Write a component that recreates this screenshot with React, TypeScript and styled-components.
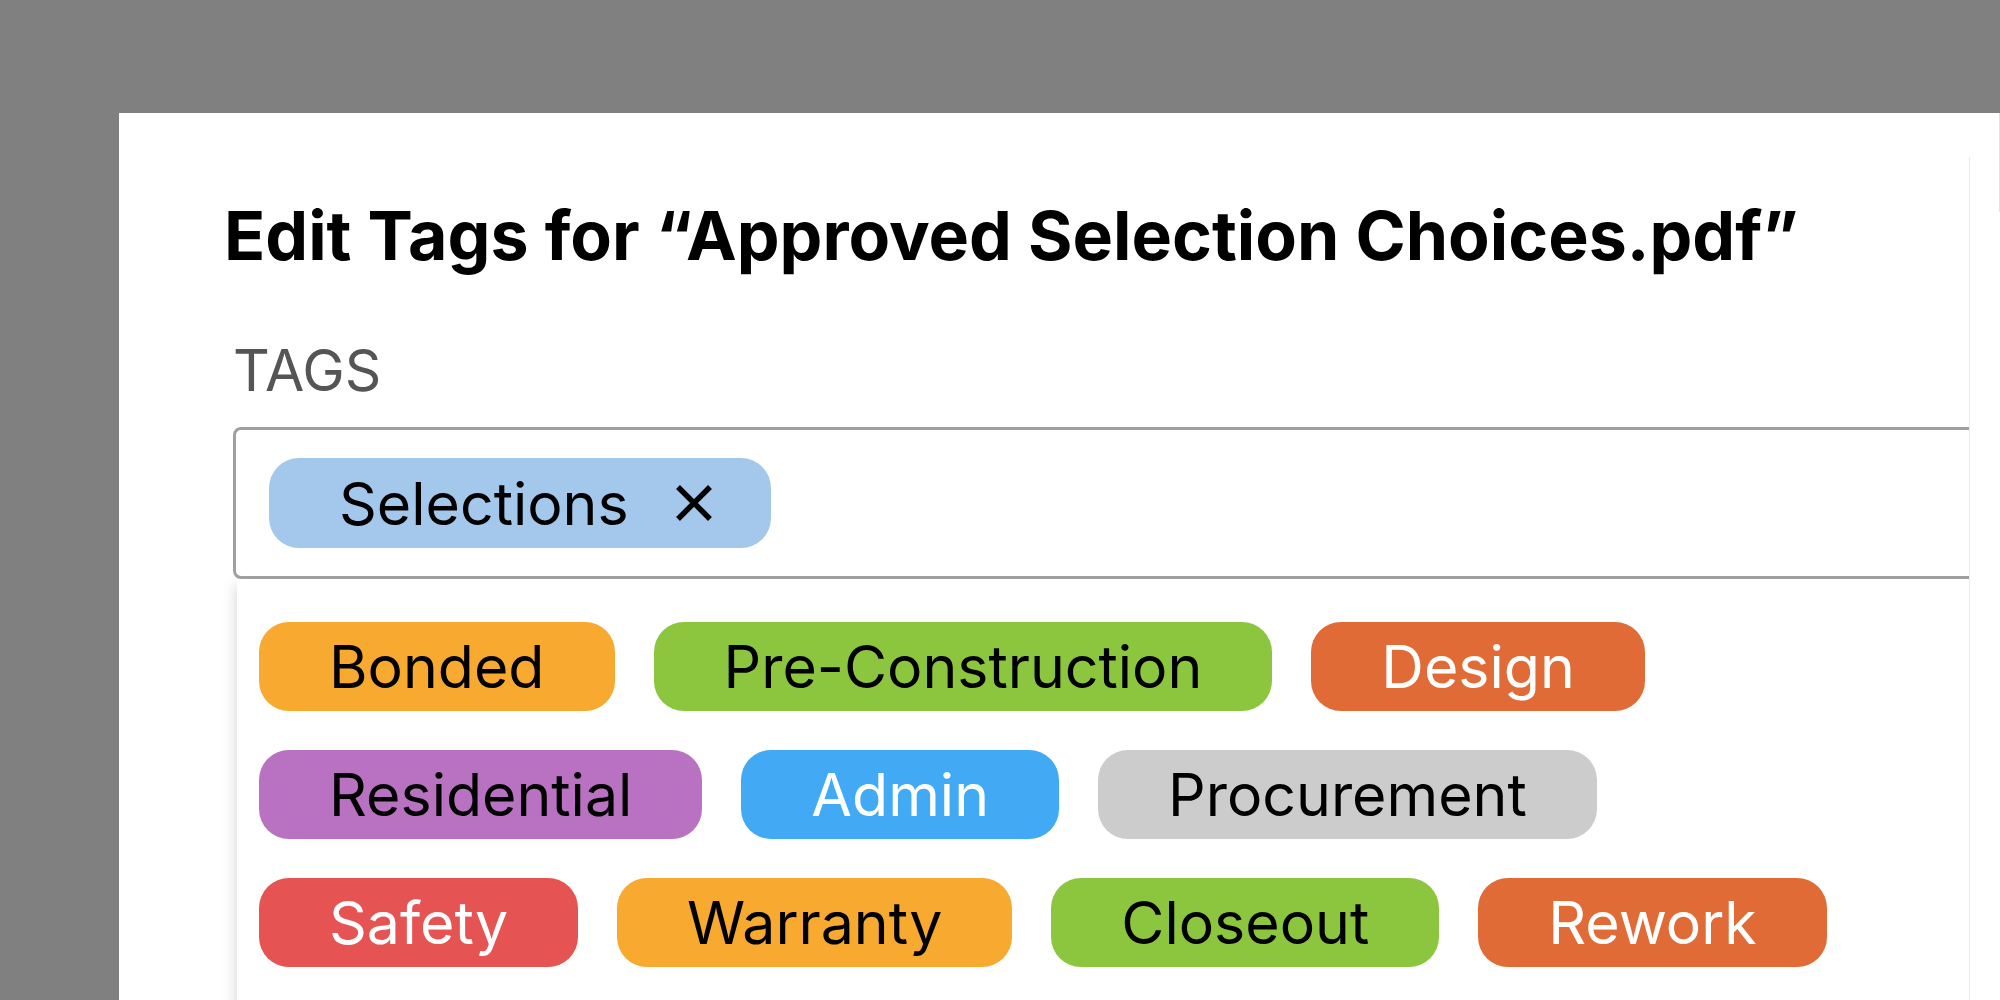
import styled, { createGlobalStyle } from 'styled-components';

const GlobalStyle = createGlobalStyle`
  html, body {
    margin: 0;
    padding: 0;
  }
  body {
    background: #808080;
    font-family: Inter, "Noto Sans", sans-serif;
    overflow: hidden;
  }
`;

type TagDef = { label: string; bg: string; fg: string };

const TAGS: TagDef[] = [
    { label: 'Bonded', bg: '#f7a930', fg: '#000' },
    { label: 'Pre-Construction', bg: '#8cc63f', fg: '#000' },
    { label: 'Design', bg: '#e06b37', fg: '#fff' },
    { label: 'Residential', bg: '#b972c1', fg: '#000' },
    { label: 'Admin', bg: '#42aaf5', fg: '#fff' },
    { label: 'Procurement', bg: '#cccccc', fg: '#000' },
    { label: 'Safety', bg: '#e65353', fg: '#fff' },
    { label: 'Warranty', bg: '#f7a930', fg: '#000' },
    { label: 'Closeout', bg: '#8cc63f', fg: '#000' },
    { label: 'Rework', bg: '#e06b37', fg: '#fff' },
];

const App = () => (
    <>
        <GlobalStyle />
        <Page>
            <Modal>
                <ModalBody>
                    <Title>Edit Tags for “Approved Selection Choices.pdf”</Title>
                    <FieldLabel>TAGS</FieldLabel>
                    <TagInput>
                        <SelectedChip>
                            Selections
                            <RemoveIcon viewBox="0 0 38 38">
                                <path d="M3 3 L35 35 M35 3 L3 35" />
                            </RemoveIcon>
                        </SelectedChip>
                    </TagInput>
                    <Dropdown>
                        <TagList>
                            {TAGS.map((t) => (
                                <Tag key={t.label} $bg={t.bg} $fg={t.fg}>
                                    {t.label}
                                </Tag>
                            ))}
                        </TagList>
                    </Dropdown>
                </ModalBody>
                <ScrollGutter>
                    <ScrollThumb />
                </ScrollGutter>
            </Modal>
        </Page>
    </>
);

export default App;

const Page = styled.div`
    width: 2000px;
    height: 1000px;
    box-sizing: border-box;
    padding: 113px 0 0 119px;
    display: flex;
    overflow: hidden;
`;

const Modal = styled.div`
    flex: 1;
    min-width: 0;
    display: flex;
    background: #fff;
`;

const ModalBody = styled.div`
    flex: 1;
    min-width: 0;
    margin-top: 44px;
    padding-left: 114px;
    border-right: 1px solid #ebebeb;
    overflow: hidden;
`;

const ScrollGutter = styled.div`
    width: 30px;
    display: flex;
    flex-direction: column;
`;

const ScrollThumb = styled.div`
    height: 99px;
    border-right: 1px solid #e2e2e2;
`;

const Title = styled.h1`
    margin: 38px 0 0 -9px;
    font-size: 68px;
    line-height: 80px;
    font-weight: 700;
    color: #000;
    white-space: nowrap;
`;

const FieldLabel = styled.div`
    margin-top: 62px;
    font-size: 57px;
    line-height: 68px;
    color: #555;
`;

const TagInput = styled.div`
    position: relative;
    z-index: 1;
    margin-top: 22px;
    width: 1800px;
    box-sizing: border-box;
    padding: 28px 33px;
    border: 3px solid #a0a0a0;
    border-radius: 8px;
    background: #fff;
    display: flex;
`;

const SelectedChip = styled.div`
    height: 90px;
    box-sizing: border-box;
    padding: 0 58px 0 70px;
    border-radius: 30px;
    background: #a4c8ec;
    display: inline-flex;
    align-items: center;
    gap: 46px;
    font-size: 59px;
    color: #000;
`;

const RemoveIcon = styled.svg`
    width: 38px;
    height: 38px;
    stroke: #000;
    stroke-width: 5.5;
    fill: none;
`;

const Dropdown = styled.div`
    margin-left: 4px;
    width: 1800px;
    box-sizing: border-box;
    padding: 43px 22px 60px;
    background: #fff;
    box-shadow: 0 6px 14px rgba(0, 0, 0, 0.18);
`;

const TagList = styled.div`
    width: 1650px;
    display: flex;
    flex-wrap: wrap;
    gap: 39px;
`;

const Tag = styled.div<{ $bg: string; $fg: string }>`
    height: 89px;
    box-sizing: border-box;
    padding: 0 70px;
    border-radius: 30px;
    background: ${(p) => p.$bg};
    color: ${(p) => p.$fg};
    display: inline-flex;
    align-items: center;
    font-size: 59px;
`;
